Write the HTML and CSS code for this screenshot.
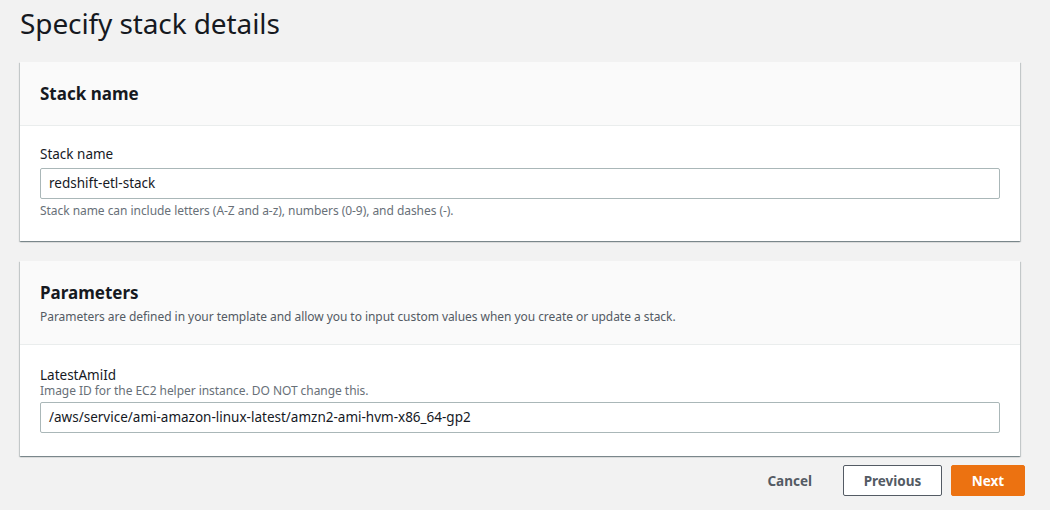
FILE: index.html
```html
<!DOCTYPE html>
<html>
<head>
<meta charset="utf-8">
<link rel="stylesheet" href="styles.css">
</head>
<body>
<div class="page">
  <h1 class="title">Specify stack details</h1>

  <section class="card card-name">
    <div class="card-header">
      <h2 class="card-title">Stack name</h2>
    </div>
    <div class="card-body">
      <div class="field">
        <div class="label">Stack name</div>
        <div class="input">redshift-etl-stack</div>
        <div class="hint hint-below">Stack name can include letters (A-Z and a-z), numbers (0-9), and dashes (-).</div>
      </div>
    </div>
  </section>

  <section class="card card-params">
    <div class="card-header">
      <h2 class="card-title">Parameters</h2>
      <div class="card-desc">Parameters are defined in your template and allow you to input custom values when you create or update a stack.</div>
    </div>
    <div class="card-body">
      <div class="field">
        <div class="label">LatestAmiId</div>
        <div class="hint hint-desc">Image ID for the EC2 helper instance. DO NOT change this.</div>
        <div class="input">/aws/service/ami-amazon-linux-latest/amzn2-ami-hvm-x86_64-gp2</div>
      </div>
    </div>
  </section>

  <div class="actions">
    <button class="btn btn-link">Cancel</button>
    <button class="btn btn-normal">Previous</button>
    <button class="btn btn-primary">Next</button>
  </div>
</div>
</body>
</html>
```

FILE: styles.css
```css
* { box-sizing: border-box; }
html, body { margin: 0; padding: 0; }
body {
  background: #f2f2f2;
  font-family: "Noto Sans", "Open Sans", sans-serif;
  color: #16191f;
  width: 1050px;
  height: 510px;
  overflow: hidden;
}
.page {
  padding: 5px 0 0 20px;
  width: 1045px;
}
.title {
  margin: 0;
  font-size: 28px;
  font-weight: 400;
  line-height: 36px;
  height: 57px;
  color: #16191f;
  letter-spacing: -0.1px;
}
.card {
  width: 1000px;
  background: #fff;
  box-shadow: 0 1px 1px 0 rgba(0,28,36,.3), 1px 1px 1px 0 rgba(0,28,36,.15), -1px 1px 1px 0 rgba(0,28,36,.15);
}
.card-name { height: 179px; margin-bottom: 20px; }
.card-params { height: 195px; }
.card-header {
  background: #fafafa;
  border-bottom: 1px solid #eaeded;
  padding: 0 20px;
}
.card-name .card-header { height: 64px; padding-top: 21px; }
.card-params .card-header { height: 84px; padding-top: 21px; }
.card-title {
  margin: 0;
  font-size: 17px;
  font-weight: 700;
  line-height: 22px;
  color: #16191f;
}
.card-desc {
  font-size: 12px;
  line-height: 16px;
  color: #545b64;
  margin-top: 5px;
  letter-spacing: -0.05px;
}
.card-body {
  padding: 18px 20px 0 20px;
}
.card-params .card-body { padding-top: 20px; }
.label {
  font-size: 13.5px;
  line-height: 20px;
  color: #16191f;
}
.hint {
  font-size: 12px;
  line-height: 16px;
  color: #687078;
  letter-spacing: -0.05px;
}
.hint-below { margin-top: 4px; }
.hint-desc { margin-bottom: 3px; margin-top: -2px; }
.input {
  width: 960px;
  height: 31px;
  border: 1px solid #aab7b8;
  border-radius: 2px;
  background: #fff;
  font-size: 13.5px;
  line-height: 29px;
  padding: 0 8px;
  color: #16191f;
  margin-top: 4px;
}
.hint-desc + .input { margin-top: 0; }
.actions {
  display: flex;
  justify-content: flex-end;
  align-items: center;
  gap: 9px;
  width: 1005px;
  margin-top: 9px;
}
.btn {
  font-family: "Noto Sans", "Open Sans", sans-serif;
  font-size: 13.5px;
  font-weight: 700;
  height: 31px;
  border-radius: 2px;
  padding: 0 20px;
  cursor: pointer;
  letter-spacing: 0;
}
.btn-link {
  background: none;
  border: 1px solid transparent;
  color: #545b64;
  margin-right: 1px;
}
.btn-normal {
  background: #fff;
  border: 1px solid #545b64;
  color: #545b64;
  width: 99px;
  padding: 0;
}
.btn-primary {
  background: #ec7211;
  border: 1px solid #ec7211;
  color: #fff;
  width: 74px;
  padding: 0;
}
```
